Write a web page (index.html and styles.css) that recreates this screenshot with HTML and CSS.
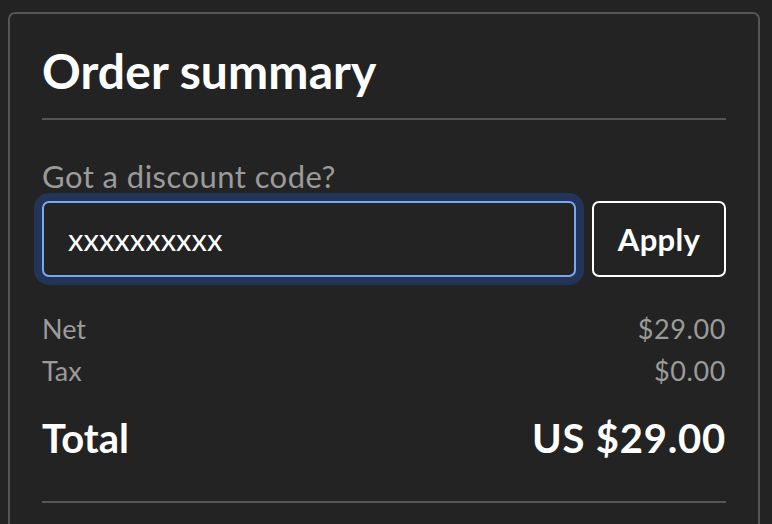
FILE: index.html
```html
<!DOCTYPE html>
<html lang="en">
<head>
<meta charset="utf-8">
<title>Order summary</title>
<link rel="stylesheet" href="styles.css">
</head>
<body>
<section class="card">
  <h1 class="title">Order summary</h1>
  <hr class="rule">
  <label class="discount-label" for="code">Got a discount code?</label>
  <div class="discount-row">
    <input id="code" class="discount-input" type="text" value="xxxxxxxxxx">
    <button class="apply-btn" type="button">Apply</button>
  </div>
  <div class="lines">
    <div class="line">
      <span>Net</span><span class="amount">$29.00</span>
    </div>
    <div class="line">
      <span>Tax</span><span class="amount">$0.00</span>
    </div>
  </div>
  <div class="total">
    <span>Total</span><span class="total-amount">US $29.00</span>
  </div>
  <hr class="rule rule-bottom">
</section>
</body>
</html>
```
FILE: styles.css
```css
html, body {
  margin: 0;
  padding: 0;
  background: #232323;
  height: 100%;
  overflow: hidden;
}
body {
  font-family: "Lato", "Open Sans", sans-serif;
  color: #ffffff;
  padding: 12px 12px 0 8px;
  box-sizing: border-box;
}
.card {
  height: 100%;
  box-sizing: border-box;
  border: 2px solid #555555;
  border-bottom: none;
  border-radius: 7px 7px 0 0;
  padding: 27px 32px 0 32px;
  overflow: hidden;
}
.title {
  margin: 0;
  font-size: 48px;
  font-weight: 700;
  line-height: 60px;
  letter-spacing: 0.1px;
}
.rule {
  border: none;
  height: 2px;
  background: #555555;
  margin: 17px 0 0 0;
}
.discount-label {
  display: block;
  color: #9b9b9b;
  font-size: 31px;
  line-height: 38px;
  margin-top: 37px;
  letter-spacing: 0.45px;
}
.discount-row {
  display: flex;
  gap: 16px;
  margin-top: 6px;
}
.discount-input {
  flex: 1;
  min-width: 0;
  height: 76px;
  box-sizing: border-box;
  background: #232323;
  border: 2px solid #7ba7ee;
  border-radius: 7px;
  box-shadow: 0 0 0 8px #223559;
  color: #ffffff;
  font-family: inherit;
  font-size: 31px;
  padding: 0 24px;
  outline: none;
}
.apply-btn {
  width: 134px;
  height: 76px;
  box-sizing: border-box;
  background: transparent;
  border: 2px solid #ffffff;
  border-radius: 7px;
  color: #ffffff;
  font-family: inherit;
  font-weight: 700;
  font-size: 31px;
  letter-spacing: 0.3px;
  padding: 0;
}
.lines {
  margin-top: 31px;
}
.line {
  display: flex;
  justify-content: space-between;
  color: #9b9b9b;
  font-size: 27px;
  line-height: 42px;
}
.amount {
  letter-spacing: 0.6px;
}
.total {
  display: flex;
  justify-content: space-between;
  font-weight: 700;
  font-size: 40px;
  line-height: 50px;
  margin-top: 21px;
}
.total-amount {
  letter-spacing: 0.8px;
}
.rule-bottom {
  margin-top: 38px;
}
```
